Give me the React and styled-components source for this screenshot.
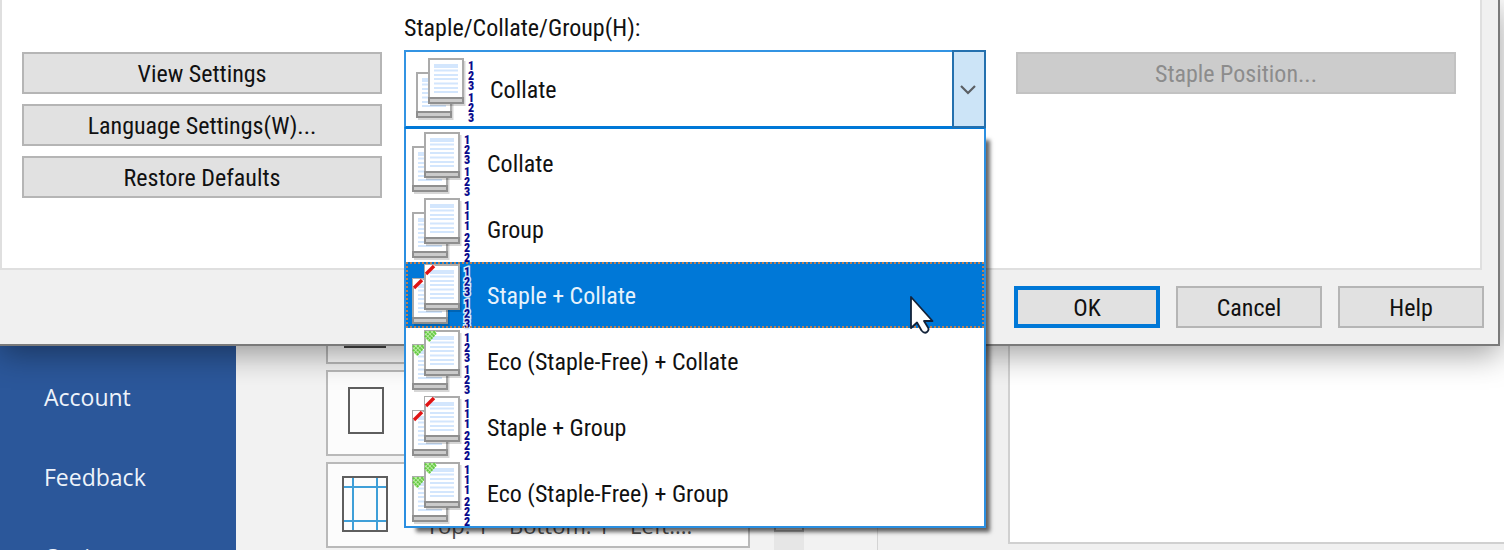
import React, { useState } from "react";
import styled, { createGlobalStyle, css } from "styled-components";

const GlobalStyle = createGlobalStyle`
  * {
    box-sizing: border-box;
  }
  body {
    margin: 0;
    overflow: hidden;
    background: #f2f2f2;
  }
`;

const dialogFont = "'Roboto Condensed', 'Liberation Sans', sans-serif";
const officeFont = "'Open Sans', 'Noto Sans', sans-serif";

const Desktop = styled.div`
  position: relative;
  height: 100vh;
  overflow: hidden;
`;

/* print page behind the dialog */

const Backstage = styled.div`
  display: flex;
  height: 100%;
  background: #f0f0f0;
  font-family: ${officeFont};
`;

const Sidebar = styled.nav`
  flex: none;
  display: flex;
  flex-direction: column;
  width: 236px;
  padding: 357px 0 0 44px;
  overflow: hidden;
  background: #2b579a;
`;

const SideLink = styled.a`
  flex: none;
  font-size: 23px;
  font-weight: 500;
  line-height: 80px;
  color: #eef3fa;
  text-decoration: none;
`;

const Settings = styled.div`
  flex: none;
  display: flex;
  gap: 24px;
  width: 642px;
  padding-left: 90px;
  overflow: hidden;
  background: #f2f2f2;
  border-right: 1px solid #d4d4d4;
`;

const Cards = styled.div`
  display: flex;
  flex-direction: column;
  gap: 6px;
  width: 424px;
  padding-top: 278px;
`;

const Card = styled.button`
  flex: none;
  display: flex;
  align-items: center;
  gap: 36px;
  height: 86px;
  padding: 0 12px;
  border: 2px solid #b9b9b9;
  background: #fcfcfc;
  font-family: ${officeFont};
  font-size: 22px;
  line-height: 30px;
  color: #505050;
  text-align: left;
  white-space: pre;

  svg {
    flex: none;
  }
`;

const CardText = styled.span`
  align-self: flex-end;
  padding-bottom: 6px;
`;

const ScrollTrack = styled.div`
  width: 30px;
  background: #e6e6e6;
`;

const ScrollThumb = styled.div`
  height: 532px;
  border: 2px solid #ababab;
  background: #f0f0f0;
`;

const Preview = styled.div`
  flex: 1;
  padding: 0 0 6px 130px;
`;

const Paper = styled.div`
  height: 100%;
  border: 2px solid #d0d0d0;
  border-width: 0 0 2px 2px;
  background: #fff;
`;

/* driver dialog */

const Dialog = styled.div`
  position: absolute;
  top: 0;
  left: 0;
  right: 4px;
  border: 2px solid #7a7a7a;
  border-width: 0 2px 2px 0;
  background: #f0f0f0;
  box-shadow: 0 8px 30px rgba(0, 0, 0, 0.38);
  font-family: ${dialogFont};
  font-size: 24px;
  color: #111;
`;

const Panel = styled.div`
  display: grid;
  grid-template-columns: 360px 1fr 440px;
  align-items: start;
  column-gap: 22px;
  margin-right: 16px;
  padding: 14px 24px 70px 20px;
  border: 2px solid #dfdfdf;
  border-top: none;
  background: #fff;
`;

const SideColumn = styled.div`
  display: flex;
  flex-direction: column;
  gap: 10px;
  padding-top: 38px;
`;

const Field = styled.div`
  position: relative;
  margin-right: 8px;
`;

const Label = styled.label`
  display: block;
  margin-bottom: 8px;
  line-height: 28px;
`;

const DialogButton = styled.button`
  width: ${(p) => p.$width || "100%"};
  height: 42px;
  padding: 2px 0 0;
  border: ${(p) => (p.$primary ? "4px solid #0078d7" : "2px solid #b5b5b5")};
  background: #e1e1e1;
  font-family: ${dialogFont};
  font-size: 24px;
  color: #111;

  &:disabled {
    border-color: #c2c2c2;
    background: #ccc;
    color: #8c8c8c;
  }
`;

const Footer = styled.div`
  display: flex;
  justify-content: flex-end;
  gap: 16px;
  padding: 16px 14px;
`;

const Combo = styled.div`
  display: flex;
  align-items: center;
  height: 78px;
  padding-left: 8px;
  border: 2px solid #3394e3;
  border-right: none;
  border-bottom-color: #0078d7;
  background: #fff;
`;

const Select = styled.select`
  flex: 1;
  height: 100%;
  margin-left: 10px;
  padding: 2px 0 0;
  appearance: none;
  border: none;
  outline: none;
  background: transparent;
  font-family: ${dialogFont};
  font-size: 24px;
  color: #111;
`;

const ArrowButton = styled.button`
  display: flex;
  align-items: center;
  justify-content: center;
  width: 34px;
  height: 78px;
  padding: 2px 2px 0 0;
  border: 2px solid #2470ae;
  background: #cce4f7;
`;

const List = styled.ul`
  position: absolute;
  top: 100%;
  left: 0;
  right: 0;
  margin: 0;
  padding: 1px 0 0;
  border: 2px solid #2b8fe1;
  border-top: 1px solid #0078d7;
  background: #fff;
  box-shadow: 8px 8px 4px -4px rgba(0, 0, 0, 0.6);
  list-style: none;
`;

const Item = styled.li`
  position: relative;
  display: flex;
  align-items: center;
  gap: 11px;
  height: 66px;
  padding-left: 4px;
  cursor: default;

  ${(p) =>
    p.$active &&
    css`
      background: #0078d7;
      color: #e6f2fc;
      outline: 2px dotted #c08050;
      outline-offset: -2px;
    `}
`;

const ItemText = styled.span`
  padding-top: 2px;
`;

const Pointer = styled.svg`
  position: absolute;
  top: 33px;
  right: 49px;
  z-index: 1;
`;

const options = [
  { name: "Collate", digits: "123123" },
  { name: "Group", digits: "111222" },
  { name: "Staple + Collate", digits: "123123", mark: "staple" },
  { name: "Eco (Staple-Free) + Collate", digits: "123123", mark: "eco" },
  { name: "Staple + Group", digits: "111222", mark: "staple" },
  { name: "Eco (Staple-Free) + Group", digits: "111222", mark: "eco" },
];

const digitLines = [14, 24, 34, 46, 56, 66];

const Sheet = ({ x, y, mark }) => (
  <g transform={`translate(${x} ${y})`}>
    <rect x="2" y="3" width="35.500" height="45" fill="#000" opacity="0.16" />
    <rect x="1" y="1" width="34" height="44" fill="#fff" stroke="#ababab" strokeWidth="2" />
    <rect x="1" y="40" width="34" height="5" fill="#cbcbcb" stroke="#8f8f8f" strokeWidth="2" />
    <rect x="6" y="6" width="24" height="4" fill="#d3e6fd" />
    <path
      d="M6 12.5h24M6 17h24M6 21h24M6 25.5h24M6 30h24M6 34h24"
      stroke="#d3e6fd"
      strokeWidth="1.800"
    />
    {mark === "staple" && (
      <>
        <path d="M1 1h10L1 10z" fill="#fff" />
        <path d="M2 10L10 2" stroke="#e01414" strokeWidth="3.400" />
      </>
    )}
    {mark === "eco" && (
      <>
        <path d="M1 1h11v3l-7 8-4-4z" fill="#b9eba3" />
        <path
          d="M1 3l2-2M1 7l6-6M3 9l8-8M5 11l7-8"
          stroke="#63c840"
          strokeWidth="2"
          strokeDasharray="2 1"
        />
      </>
    )}
  </g>
);

const PagesIcon = ({ digits, mark, halo }) => (
  <svg width="66" height="66" viewBox="0 0 66 66" overflow="visible" aria-hidden="true">
    <Sheet x={2} y={16} mark={mark} />
    <Sheet x={14} y={2} mark={mark} />
    <g
      fill="#0a0a8c"
      stroke={halo ? "#d6e8fa" : "none"}
      strokeWidth="3"
      paintOrder="stroke"
      fontFamily="Roboto Condensed, sans-serif"
      fontSize="12"
      fontWeight="900"
      textAnchor="middle"
    >
      {digits.split("").map((d, i) => (
        <text key={i} x="57" y={digitLines[i]}>
          {d}
        </text>
      ))}
    </g>
  </svg>
);

const App = () => {
  const [value, setValue] = useState("Collate");
  const [active, setActive] = useState("Staple + Collate");
  const [open, setOpen] = useState(true);

  const current = options.find((o) => o.name === value);

  const choose = (name) => {
    setValue(name);
    setOpen(false);
  };

  return (
    <Desktop>
      <GlobalStyle />
      <Backstage>
        <Sidebar>
          <SideLink href="#account">Account</SideLink>
          <SideLink href="#feedback">Feedback</SideLink>
          <SideLink href="#options">Options</SideLink>
        </Sidebar>
        <Settings>
          <Cards>
            <Card aria-label="Orientation">
              <svg width="50" height="60" viewBox="0 0 50 60">
                <rect x="5" y="2" width="40" height="54" fill="#fff" stroke="#444" strokeWidth="2" />
              </svg>
            </Card>
            <Card aria-label="Paper size">
              <svg width="50" height="60" viewBox="0 0 50 60">
                <rect x="9" y="5" width="34" height="45" fill="#fcfcfc" stroke="#5e5e5e" strokeWidth="2" />
              </svg>
            </Card>
            <Card>
              <svg width="50" height="60" viewBox="0 0 50 60">
                <path d="M13 3v54M37 3v54M3 12h44M3 46h44" stroke="#3f9fd8" strokeWidth="2" />
                <rect x="3" y="2" width="44" height="54" fill="none" stroke="#5e5e5e" strokeWidth="2" />
              </svg>
              <CardText>{'Top: 1"  Bottom: 1"  Left:...'}</CardText>
            </Card>
          </Cards>
          <ScrollTrack>
            <ScrollThumb />
          </ScrollTrack>
        </Settings>
        <Preview>
          <Paper />
        </Preview>
      </Backstage>

      <Dialog role="dialog">
        <Panel>
          <SideColumn>
            <DialogButton>View Settings</DialogButton>
            <DialogButton>Language Settings(W)...</DialogButton>
            <DialogButton>Restore Defaults</DialogButton>
          </SideColumn>
          <Field>
            <Label htmlFor="finishing">Staple/Collate/Group(H):</Label>
            <Combo>
              <PagesIcon digits={current.digits} mark={current.mark} />
              <Select
                id="finishing"
                value={value}
                onMouseDown={(e) => {
                  e.preventDefault();
                  setOpen(!open);
                }}
                onChange={(e) => setValue(e.target.value)}
              >
                {options.map((o) => (
                  <option key={o.name}>{o.name}</option>
                ))}
              </Select>
              <ArrowButton aria-label="Show options" onClick={() => setOpen(!open)}>
                <svg width="18" height="12" viewBox="0 0 18 12">
                  <path d="M2 2l7 7 7-7" fill="none" stroke="#5a5f63" strokeWidth="2.200" />
                </svg>
              </ArrowButton>
            </Combo>
            {open && (
              <List role="listbox">
                {options.map((o) => (
                  <Item
                    key={o.name}
                    role="option"
                    aria-selected={o.name === active}
                    $active={o.name === active}
                    onMouseEnter={() => setActive(o.name)}
                    onClick={() => choose(o.name)}
                  >
                    <PagesIcon digits={o.digits} mark={o.mark} halo={o.name === active} />
                    <ItemText>{o.name}</ItemText>
                    {o.name === active && (
                      <Pointer width="26" height="40" viewBox="0 0 26 40">
                        <path
                          d="M2 2v31l6-5.500 4.500 8q3 3.500 5.500 1.500t1-4.500L15 26h8.500z"
                          fill="#fff"
                          stroke="#13233a"
                          strokeWidth="1.800"
                          strokeLinejoin="round"
                        />
                      </Pointer>
                    )}
                  </Item>
                ))}
              </List>
            )}
          </Field>
          <SideColumn>
            <DialogButton disabled>Staple Position...</DialogButton>
          </SideColumn>
        </Panel>
        <Footer>
          <DialogButton $width="146px" $primary>
            OK
          </DialogButton>
          <DialogButton $width="146px">Cancel</DialogButton>
          <DialogButton $width="146px">Help</DialogButton>
        </Footer>
      </Dialog>
    </Desktop>
  );
};

export default App;
